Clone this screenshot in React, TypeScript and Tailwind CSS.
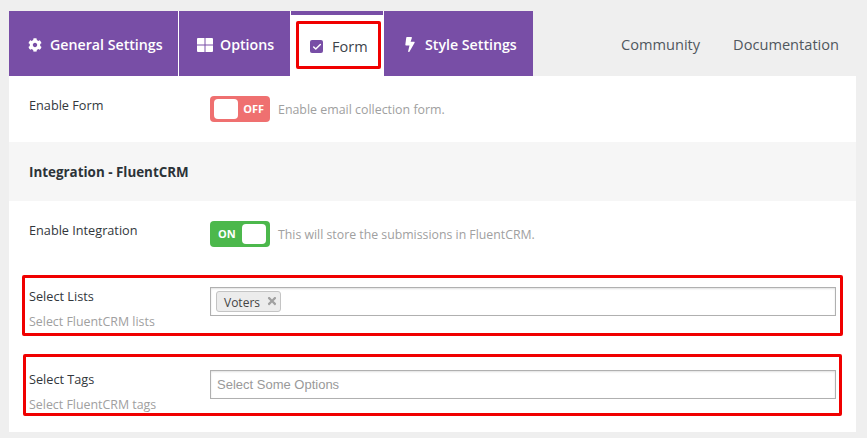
import { Check } from "lucide-react";
import { FaBolt, FaCog, FaTimes } from "react-icons/fa";

const font = "font-['Open_Sans',sans-serif]";

function Tab({ icon, label, className }: { icon: React.ReactNode; label: string; className: string }) {
    return (
        <div className={`flex h-full items-center bg-[#784ea6] pt-[2px] text-[14.2px] font-semibold text-white ${className}`}>
            {icon}
            <span>{label}</span>
        </div>
    );
}

function WindowIcon() {
    return (
        <svg width="16" height="14" viewBox="0 0 16 14" fill="#fff">
            <path d="M1 0h6.5v6.5H0V1a1 1 0 0 1 1-1z" />
            <path d="M8.5 0H15a1 1 0 0 1 1 1v5.5H8.5z" />
            <path d="M0 7.5h7.5V14H1a1 1 0 0 1-1-1z" />
            <path d="M8.5 7.5H16V13a1 1 0 0 1-1 1H8.5z" />
        </svg>
    );
}

function Label({ title, hint, className }: { title: string; hint?: string; className: string }) {
    return (
        <div className={`shrink-0 ${className}`}>
            <div className="text-[12.7px] font-medium leading-[18px] text-[#32373c]">{title}</div>
            {hint && <div className="mt-[8px] text-[12.4px] leading-[18px] text-[#a0a0a0]">{hint}</div>}
        </div>
    );
}

function Toggle({ on }: { on: boolean }) {
    const knob = <span className="h-[20px] w-[24px] rounded-[4px] bg-white" />;
    return (
        <div className={`flex h-[26px] w-[60px] items-center justify-between rounded-[4px] px-[4px] text-[11px] font-bold text-white ${on ? "bg-[#4cb84c]" : "bg-[#ef7070]"}`}>
            {on ? <span className="pl-[4px]">ON</span> : knob}
            {on ? knob : <span className="pr-[2px]">OFF</span>}
        </div>
    );
}

export default function App() {
    return (
        <div className={`h-[438px] w-[867px] overflow-hidden bg-[#efefef] pl-[9px] pr-[11px] pt-[11px] ${font}`}>
            {/* tab bar */}
            <div className="flex h-[65px] items-stretch">
                <Tab className="w-[169px] gap-[8px] pl-[19px]" label="General Settings" icon={<FaCog className="text-[14px]" />} />
                <div className="w-px bg-white" />
                <Tab className="w-[111px] gap-[7px] pl-[18px]" label="Options" icon={<WindowIcon />} />
                <div className="w-px bg-white" />
                <div className="relative flex w-[92px] flex-col bg-white">
                    <div className="h-[4px] bg-[#784ea6]" />
                    <div className="flex flex-1 items-center gap-[9px] pl-[19px] pt-[2px] text-[14.5px] text-[#3c434a]">
                        <span className="flex h-[13px] w-[13px] items-center justify-center rounded-[2px] bg-[#784ea6]">
                            <Check className="h-[10px] w-[10px] text-white" strokeWidth={3.5} />
                        </span>
                        <span>Form</span>
                    </div>
                    {/* annotation box */}
                    <div className="absolute left-[5px] top-[10px] h-[48px] w-[85px] rounded-[2px] border-[3px] border-[#f00000]" />
                </div>
                <div className="w-px bg-white" />
                <Tab className="w-[149px] gap-[9px] pl-[20px]" label="Style Settings" icon={<FaBolt className="h-[15px] w-[12px]" />} />
                <div className="ml-auto flex items-center gap-[33px] pr-[17px] pt-[2px] text-[14.6px] font-medium text-[#50575e]">
                    <span>Community</span>
                    <span>Documentation</span>
                </div>
            </div>

            {/* panel */}
            <div className="bg-white">
                <div className="flex h-[66px] pl-[20px] pt-[20px]">
                    <Label title="Enable Form" className="w-[181px]" />
                    <div className="flex items-center gap-[8px] self-start">
                        <Toggle on={false} />
                        <span className="pt-[2px] text-[12.4px] text-[#a0a0a0]">Enable email collection form.</span>
                    </div>
                </div>

                <div className="flex h-[59px] items-center bg-[#f6f6f6] pl-[20px] pt-[2px] text-[13.4px] font-bold text-[#2c3338]">
                    Integration - FluentCRM
                </div>

                <div className="flex h-[74px] pl-[20px] pt-[20px]">
                    <Label title="Enable Integration" className="w-[181px]" />
                    <div className="flex items-center gap-[8px] self-start">
                        <Toggle on />
                        <span className="pt-[2px] text-[12.3px] text-[#a0a0a0]">This will store the submissions in FluentCRM.</span>
                    </div>
                </div>

                <div className="mx-[13px] flex h-[61px] rounded-[2px] border-[3px] border-[#f00000] pl-[4px] pr-[4px] pt-[9px]">
                    <Label title="Select Lists" hint="Select FluentCRM lists" className="w-[181px]" />
                    <div className="flex h-[29px] flex-1 items-center border border-[#b0b0b0] pl-[5px] shadow-[inset_0_1px_2px_rgba(0,0,0,0.12)]">
                        <span className="flex h-[21px] w-[65px] items-center gap-[6px] rounded-[3px] border border-[#c4c4c4] bg-[#ececec] pl-[7px] pt-[2px] text-[12px] text-[#444]">
                            Voters
                            <FaTimes className="-mt-[3px] text-[12px] text-[#a0a0a0]" />
                        </span>
                    </div>
                </div>

                <div className="mx-[14px] mt-[18px] flex h-[62px] rounded-[2px] border-[3px] border-[#f00000] pl-[3px] pr-[3px] pt-[13px]">
                    <Label title="Select Tags" hint="Select FluentCRM tags" className="w-[181px]" />
                    <div className="flex h-[29px] flex-1 items-center border border-[#b0b0b0] pl-[6px] font-['Liberation_Sans',sans-serif] text-[13px] text-[#999] shadow-[inset_0_1px_2px_rgba(0,0,0,0.12)]">
                        Select Some Options
                    </div>
                </div>

                <div className="h-[16px]" />
            </div>
        </div>
    );
}
